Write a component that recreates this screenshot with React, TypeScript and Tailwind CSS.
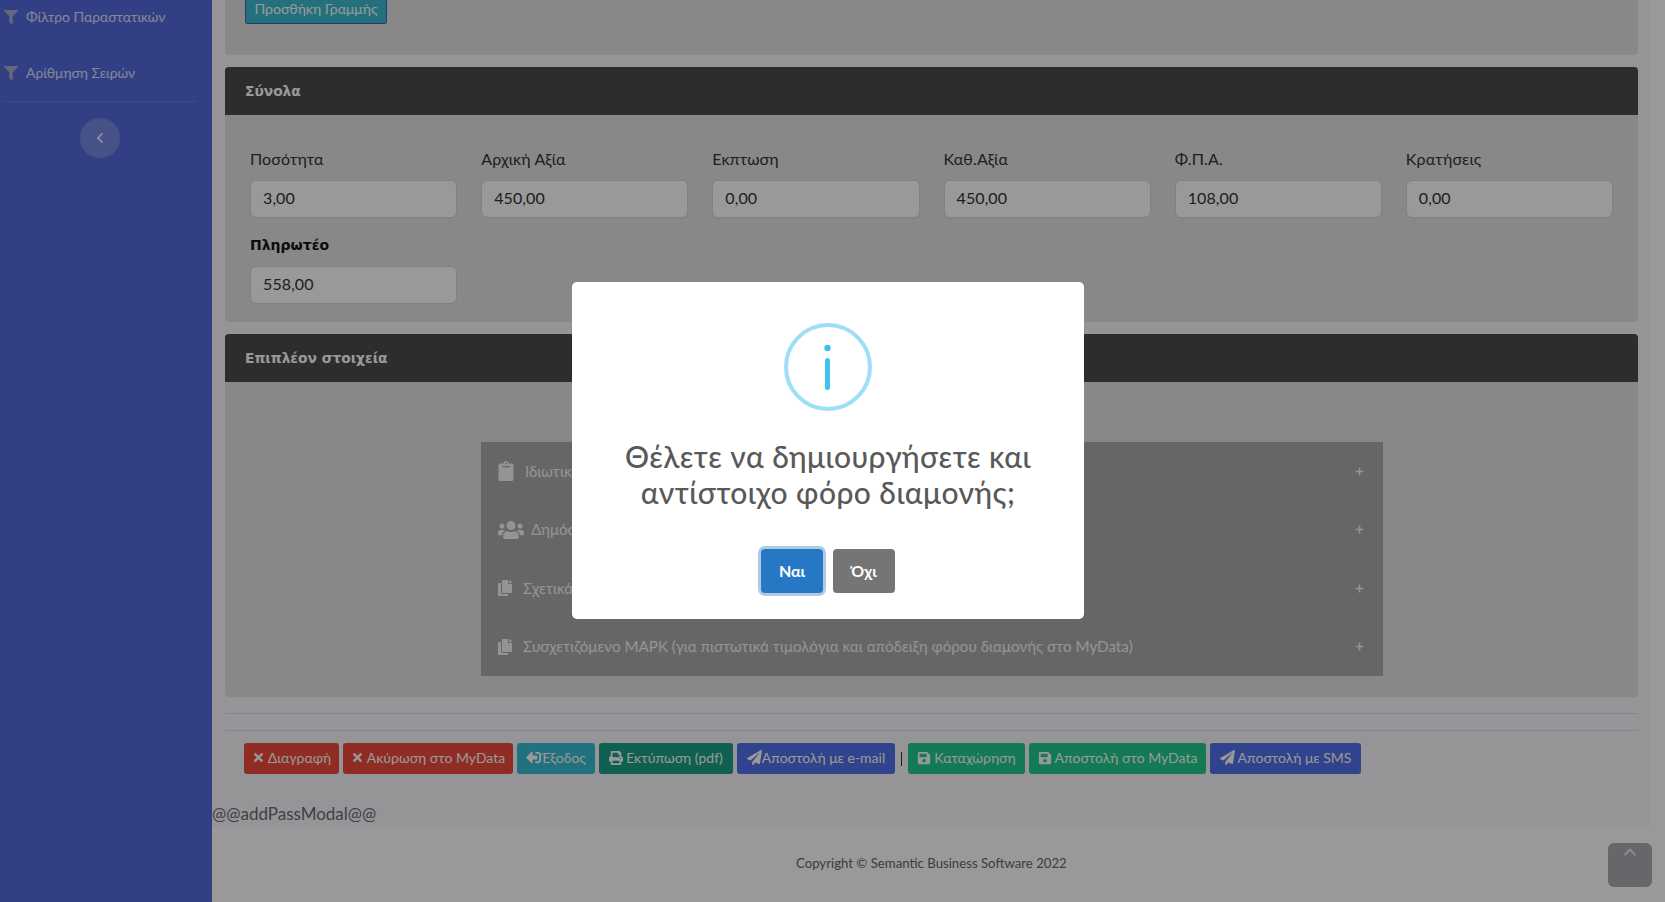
import React from "react";
import {
  FaFilter, FaChevronLeft, FaTimes, FaSignOutAlt, FaPrint, FaPaperPlane, FaSave,
  FaClipboard, FaUsers, FaCopy, FaPlus, FaChevronUp,
} from "react-icons/fa";

const fields = [
  ["Ποσότητα", "3,00"],
  ["Αρχική Αξία", "450,00"],
  ["Εκπτωση", "0,00"],
  ["Καθ.Αξία", "450,00"],
  ["Φ.Π.Α.", "108,00"],
  ["Κρατήσεις", "0,00"],
];

function Field({ label, value, bold }: { label: string; value: string; bold?: boolean }) {
  return (
    <div className="px-3">
      <div className={bold ? "h-[24px] text-[14px] leading-[25px] font-bold text-[#111] font-['DejaVu_Sans',sans-serif]" : "h-[24px] text-[16px] leading-[24px] tracking-[0.15px] text-[#333]"}>{label}</div>
      <div className="mt-[9px] h-[38px] w-full rounded-[6px] border border-[#d4d4e4] bg-white px-3 text-[16px] leading-[34px] tracking-[0.1px] text-[#333]">{value}</div>
    </div>
  );
}

function Panel({ title, children, className }: { title: string; children: React.ReactNode; className: string }) {
  return (
    <section className={"rounded-[4px] bg-[#e3e3e3] " + className}>
      <div className="flex h-[48px] items-center rounded-t-[4px] bg-[#4b4b4b] px-5 text-[13.8px] font-bold text-white font-['DejaVu_Sans',sans-serif]">{title}</div>
      {children}
    </section>
  );
}

function AccRow({ icon, text, gap, pad }: { icon: React.ReactNode; text: string; gap: string; pad: string }) {
  return (
    <div className={"flex h-[58.5px] items-center pr-[19px] text-[15.2px] text-white/90 " + pad}>
      <span className="flex shrink-0 items-center">{icon}</span>
      <span className={"whitespace-nowrap " + gap}>{text}</span>
      <FaPlus className="ml-auto shrink-0 text-[9px]" />
    </div>
  );
}

function Btn({ color, icon, text, width, gap = "gap-[3px]" }: { color: string; icon: React.ReactNode; text: string; width: string; gap?: string }) {
  return (
    <div className={"flex h-[31px] items-center justify-center whitespace-nowrap rounded-[3px] pb-[2px] text-[14px] text-white " + width + " " + gap + " " + color}>
      {icon}
      <span>{text}</span>
    </div>
  );
}

export default function App() {
  return (
    <div className="relative flex h-[902px] w-[1665px] overflow-hidden bg-white font-['Lato','Noto_Sans',sans-serif]">
      <aside className="w-[212px] shrink-0 bg-[#5469dd] text-[13.9px] text-white/80">
        <div className="flex h-[34px] items-center gap-[8px] pl-[4px]">
          <FaFilter className="text-[14px] text-[#a8aecb]" />
          <span>Φίλτρο Παραστατικών</span>
        </div>
        <div className="mt-[22px] flex h-[34px] items-center gap-[8px] pl-[4px]">
          <FaFilter className="text-[14px] text-[#a8aecb]" />
          <span>Αρίθμηση Σειρών</span>
        </div>
        <div className="mx-[4px] mt-[11px] w-[192px] border-t border-white/15" />
        <div className="ml-[80px] mt-[16px] flex h-[40px] w-[40px] items-center justify-center rounded-full bg-white/20">
          <FaChevronLeft className="text-[12px]" />
        </div>
      </aside>

      <main className="flex w-[1453px] flex-col">
        <div className="h-[827px] w-[1439px] overflow-hidden bg-[#f8f8fc] px-[13px]">
          <section className="h-[55px] rounded-b-[4px] bg-[#e3e3e3] pl-[20px]">
            <div className="flex h-[24px] w-[142px] items-end justify-center rounded-b-[3px] border border-t-0 border-[#3a60c0] bg-[#3cbdd0] pb-[4px] text-[14px] text-white">Προσθήκη Γραμμής</div>
          </section>

          <Panel title="Σύνολα" className="mt-[12px] h-[255px]">
            <div className="grid grid-cols-6 gap-y-[15px] px-[13px] pt-[32px]">
              {fields.map(([l, v]) => <Field key={l} label={l} value={v} />)}
              <Field label="Πληρωτέο" value="558,00" bold />
            </div>
          </Panel>

          <Panel title="Επιπλέον στοιχεία" className="mt-[12px] h-[363px]">
            <div className="ml-[256px] mt-[60px] h-[234px] w-[902px] bg-[#aaaaaa]">
              <AccRow pad="pl-[15px]" icon={<FaClipboard className="text-[20px]" />} text="Ιδιωτικά στοιχεία" gap="ml-[9px]" />
              <AccRow pad="pl-[17px]" icon={<FaUsers className="text-[26px]" />} text="Δημόσια στοιχεία" gap="ml-[7px]" />
              <AccRow pad="pl-[16px]" icon={<FaCopy className="text-[16px]" />} text="Σχετικά παραστατικά" gap="ml-[10px]" />
              <AccRow pad="pl-[16px]" icon={<FaCopy className="text-[16px]" />} text="Συσχετιζόμενο ΜΑΡΚ (για πιστωτικά τιμολόγια και απόδειξη φόρου διαμονής στο MyData)" gap="ml-[10px]" />
            </div>
          </Panel>

          <div className="mt-[16px] h-[18px] border-y border-[#dcdce4]" />

          <div className="ml-[19px] mt-[12px] flex items-center gap-[4px]">
            <Btn width="w-[95px]" color="bg-[#ee4a3b]" icon={<FaTimes className="text-[13px]" />} text="Διαγραφή" />
            <Btn width="w-[170px]" color="bg-[#ee4a3b]" icon={<FaTimes className="text-[13px]" />} text="Ακύρωση στο MyData" />
            <Btn width="w-[78px]" color="bg-[#3abcd4]" gap="gap-0" icon={<FaSignOutAlt className="rotate-180 text-[15px]" />} text="Έξοδος" />
            <Btn width="w-[134px]" color="bg-[#19a086]" icon={<FaPrint className="text-[14px]" />} text="Εκτύπωση (pdf)" />
            <Btn width="w-[158px]" color="bg-[#5070e9]" gap="gap-0" icon={<FaPaperPlane className="text-[15px]" />} text="Αποστολή με e-mail" />
            <span className="mx-[2px] h-[14px] border-l border-[#333]" />
            <Btn width="w-[117px]" color="bg-[#20cb8e]" icon={<FaSave className="text-[14px]" />} text="Καταχώρηση" />
            <Btn width="w-[177px]" color="bg-[#20cb8e]" icon={<FaSave className="text-[14px]" />} text="Αποστολή στο MyData" />
            <Btn width="w-[151px]" color="bg-[#5070e9]" icon={<FaPaperPlane className="text-[15px]" />} text="Αποστολή με SMS" />
          </div>

          <div className="-ml-[13px] mt-[28px] text-[17px] leading-[24px] text-[#6a6a78]">@@addPassModal@@</div>
        </div>

        <div className="relative flex-1">
          <p className="pl-[584px] pt-[28px] text-[13.2px] leading-[16px] text-[#666]">Copyright © Semantic Business Software 2022</p>
        </div>
      </main>

      <div className="absolute left-[1608px] top-[843px] flex h-[44px] w-[44px] justify-center rounded-[6px] bg-[#aaacb2] pt-[2px] text-white/70">
        <FaChevronUp className="text-[14px]" />
      </div>

      <div className="absolute inset-0 bg-black/40" />

      <div className="absolute left-[572px] top-[282px] h-[337px] w-[512px] rounded-[5px] bg-white text-center">
        <div className="mx-auto mt-[41px] flex h-[88px] w-[88px] items-center justify-center rounded-full border-[4px] border-[#9de0f6] text-[#3fc3ee]">
          <svg width="8" height="46" viewBox="0 0 8 46"><circle cx="3.5" cy="4" r="3.2" fill="currentColor" /><rect x="1" y="14" width="5" height="32" rx="2.5" fill="currentColor" /></svg>
        </div>
        <h2 className="mx-auto mt-[27px] w-[440px] text-[30px] font-medium leading-[36px] tracking-[0.45px] text-[#595959]">Θέλετε να δημιουργήσετε και αντίστοιχο φόρο διαμονής;</h2>
        <div className="mt-[39px] flex justify-center gap-[10px]">
          <button className="h-[44px] w-[62px] rounded-[4px] bg-[#2778c4] text-[16px] font-bold text-white shadow-[0_0_0_3px_rgba(100,150,200,0.5)]">Ναι</button>
          <button className="h-[44px] w-[62px] rounded-[4px] bg-[#757575] text-[16px] font-bold text-white">Όχι</button>
        </div>
      </div>
    </div>
  );
}
